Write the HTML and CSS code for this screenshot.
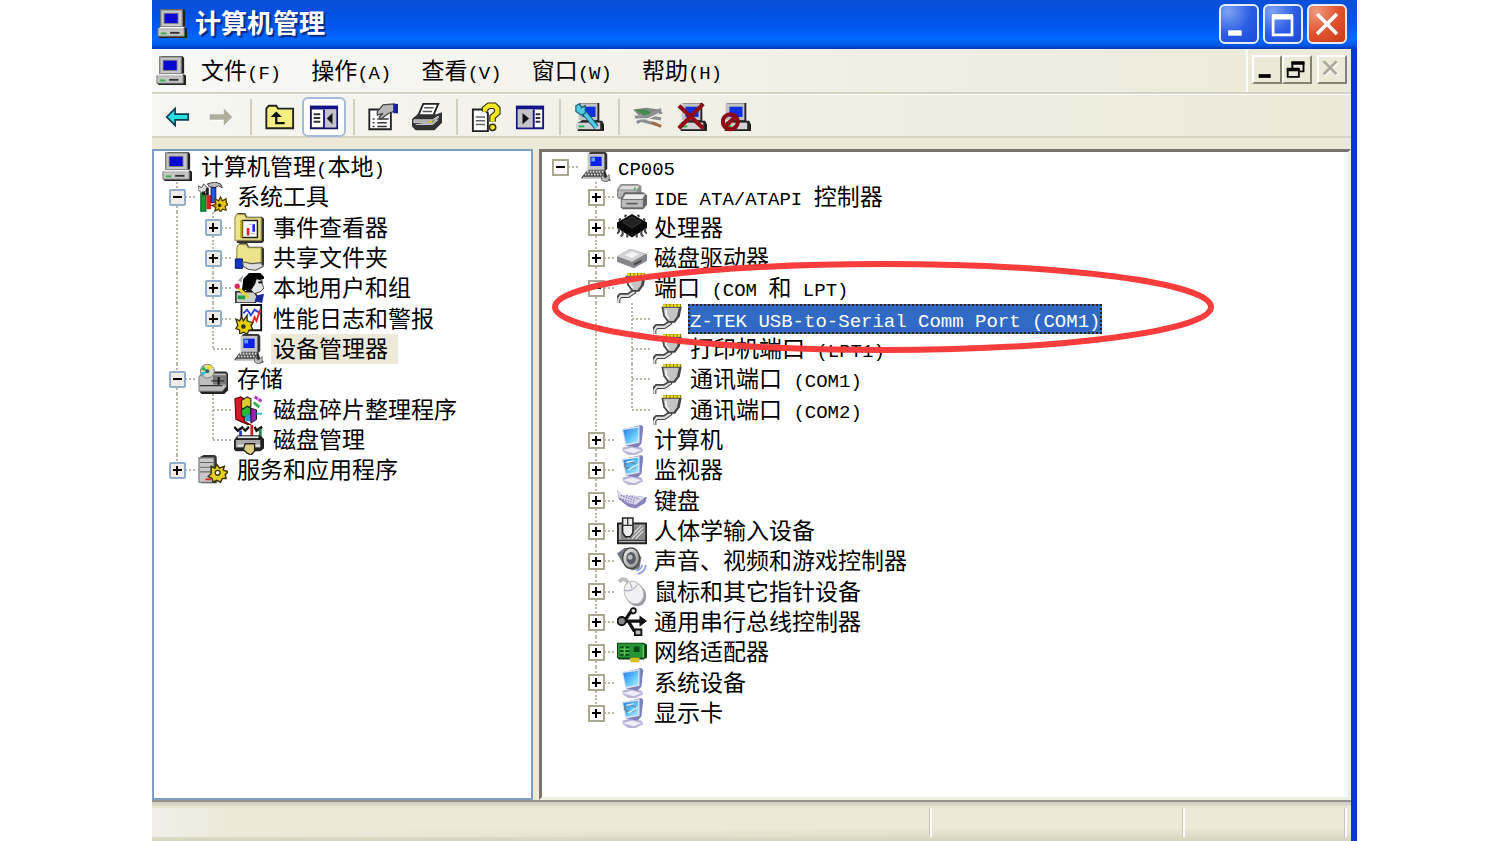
FILE: index.html
```html
<!DOCTYPE html>
<html lang="zh-CN">
<head>
<meta charset="utf-8">
<title>计算机管理</title>
<link rel="stylesheet" href="styles.css">
</head>
<body>
<svg class="sprite" aria-hidden="true">
  <defs>
    <linearGradient id="scr" x1="0" y1="0" x2="1" y2="1"><stop offset="0" stop-color="#2a78e0"/><stop offset=".6" stop-color="#62c8ff"/><stop offset="1" stop-color="#b8ecff"/></linearGradient>
    <linearGradient id="metal" x1="0" y1="0" x2="1" y2="1"><stop offset="0" stop-color="#f4f4f4"/><stop offset="1" stop-color="#858585"/></linearGradient>
  </defs>
  <symbol id="pc" viewBox="0 0 16 16">
    <path d="M3 0h11l1 1v8l-1 1H3z" fill="#222"/><path d="M2 .5h11.500v9H2z" fill="#c8c8c8" stroke="#777" stroke-width=".7"/>
    <path d="M3.500 2h8v6H3.500z" fill="#888"/><path d="M4 2.500h7v5H4z" fill="#0808d0"/>
    <path d="M.5 10.500l2-1h12l1.500 1v5H1.500l-1-1z" fill="#222"/><path d="M.5 10.500h14v4H.5z" fill="#c6c6c6" stroke="#777" stroke-width=".5"/>
    <path d="M.5 10.500l1.500-1h13l-1 1z" fill="#eee"/><path d="M2 13h3" stroke="#38b048"/><path d="M7 12.700h5" stroke="#333"/>
  </symbol>
  <symbol id="dev" viewBox="0 0 16 16">
    <path d="M4 1l1-1h8l1 1v8l-1 1H4z" fill="#333"/><path d="M3.500 1h9v8.500h-9z" fill="#c4c4c4"/><path d="M5 2.500h6v5H5z" fill="#0c20e8"/><path d="M5.500 3h2v2h-2z" fill="#60a0ff"/>
    <path d="M3 10h10l1 3 2 2-3 1-2-2H0z" fill="#333"/><path d="M3 10.500h9M2 12h10" stroke="#ddd" stroke-dasharray="1 .6"/><path d="M1 13.500h11" stroke="#bbb" stroke-width=".7"/>
    <path d="M11 12l2 2 2-2v3l-2 1-2-1z" fill="#bbb" stroke="#555" stroke-width=".4"/>
  </symbol>
  <symbol id="tools" viewBox="0 0 16 16">
    <path d="M0 2l2 1 1-2 2 2-1 2-2 1-2-2z" fill="#ddd" stroke="#444" stroke-width=".5"/><path d="M5 1l4-1 3 1 1 2-2-1-2 1-3-.5z" fill="#bbb" stroke="#333" stroke-width=".5"/>
    <path d="M1.500 6h2.700v9.500H1.500z" fill="#159a28" stroke="#063" stroke-width=".6"/><path d="M4.500 7h2.500v7.500h-2.500z" fill="#e02020"/><path d="M7 3h2.500v8H7z" fill="#2358e8" stroke="#114" stroke-width=".5"/><path d="M5 3v4M3 5v2" stroke="#222" stroke-width="1.500"/>
    <path d="M9 9l2 1 1-2 1 2 2-1v2l1 1-1.500 1 .5 2-2-.5-1 1.500-1-1.500-2 1 .5-2-2-1 2-.5z" fill="#e8c820" stroke="#4c4000" stroke-width=".7"/><circle cx="11.500" cy="12.500" r="1" fill="#443800"/>
  </symbol>
  <symbol id="folder" viewBox="0 0 16 16"><path d="M1 2l1-2h4l1 2h8l1 1v12l-1 1H1.500z" fill="#333"/><path d="M.5 2.500L1.500 .7h4l1 1.800h8v12H.5z" fill="#ece48a" stroke="#99904c" stroke-width=".6"/></symbol>
  <symbol id="event" viewBox="0 0 16 16"><use href="#folder"/><path d="M4.500 4h8v9h-8z" fill="#fff" stroke="#222" stroke-width=".8"/><path d="M4 4v9" stroke="#b09a00" stroke-width="1.500" stroke-dasharray="1 .6"/><path d="M7.500 8v4" stroke="#e22" stroke-width="1.400"/><path d="M10.500 6v4" stroke="#22d" stroke-width="1.400"/><path d="M8 6h2M9 11h2" stroke="#aaa" stroke-width=".5"/></symbol>
  <symbol id="share" viewBox="0 0 16 16"><path d="M2 2l1-2h4l1 2h7l1 1v9H2z" fill="#333"/><path d="M1.500 2.500L2.500 .7h4l1 1.800h7v9h-13z" fill="#ece48a" stroke="#99904c" stroke-width=".6"/><path d="M.7 8.500h3.800v5H.7z" fill="#1038c0" stroke="#001060" stroke-width=".5"/><path d="M4.500 10l5 1 5-.5 1 2-4 2-4-.5-2.500-1.500z" fill="#ddd" stroke="#555" stroke-width=".6"/></symbol>
  <symbol id="users" viewBox="0 0 16 16"><path d="M1 10h10l2 4-2 2H1z" fill="#c8d0c8" stroke="#222" stroke-width=".8"/><path d="M5 3l3-3h6l2 2v1l-3 1-1 4-4 2-2-1-2 2z" fill="#000"/><path d="M12 3l3 1v2l1 2-2 2-3 1-2-2 2-3z" fill="#e4e4e4" stroke="#111" stroke-width=".4"/><path d="M13 5h2" stroke="#000"/><path d="M1 7l7 6" stroke="#e8d030" stroke-width="1.500"/><circle cx="1.700" cy="7" r="1.400" fill="#d82868"/><path d="M2 12h4v2H2z" fill="#20a040"/><path d="M12 12l4-1-1 5-4-1z" fill="#1828a0"/><path d="M2 4l3-3-1 4z" fill="#aaa"/></symbol>
  <symbol id="perf" viewBox="0 0 16 16"><path d="M4 .5h10.500v13.500H4z" fill="#fff" stroke="#111"/><path d="M5 5l2-2 2 3 2-3 3 2" fill="none" stroke="#24d"/><path d="M9 12l2-5 1 2 2-6" fill="none" stroke="#e22"/><path d="M1 8l2 1 1-2 1 2 2-3v3l3 1-1 1.500 1 2-2 .5-1 2-2-1-2 1 0-2-2-1 1-1.500z" fill="#e4d010" stroke="#333000" stroke-width=".7"/><circle cx="5" cy="12" r="1.200" fill="#333000"/></symbol>
  <symbol id="store" viewBox="0 0 16 16"><path d="M1 6l2-2h12l1 1v9l-2 2H2l-1-1z" fill="#222"/><path d="M.5 7l2-2H15v7l-2 2.500H.5z" fill="#bdbdbd" stroke="#777" stroke-width=".5"/><path d="M8 6h7v5H8z" fill="#777"/><path d="M7 9h7M1 11.500h12" stroke="#333" stroke-width=".7"/><path d="M11 7v4" stroke="#111"/><circle cx="5" cy="3.800" r="3.700" fill="#d8d8c8" stroke="#777" stroke-width=".5"/><path d="M5 3.800L1.500 3l1.500-2z" fill="#30b050"/><path d="M5 3.800L4.500 .3l3.500 1z" fill="#f0e020"/><path d="M5 3.800L1.500 4.500l1 2z" fill="#30b8e0"/><circle cx="5" cy="3.800" r="1" fill="#266"/></symbol>
  <symbol id="defrag" viewBox="0 0 16 16"><path d="M.5 2l3-1 2 1v12L9 16l-1 0-7-3z" fill="#d81828" stroke="#600" stroke-width=".6"/><path d="M4 3l3-2 2 1v4l-3 2-2-1z" fill="#e0c828" stroke="#222" stroke-width=".6"/><path d="M4 8l3-2 2 1v3l-3 2-2-1z" fill="#28b838" stroke="#131" stroke-width=".6"/><path d="M6 11l3-1 2 1-1 3-4 0z" fill="#28a0d8"/><path d="M9 7l3 1v5l-3 2z" fill="#a020b0" stroke="#202" stroke-width=".5"/><path d="M11 1l4 2.500" stroke="#b040c8" stroke-width="1.600" stroke-dasharray="2 .4"/><path d="M10.500 4l3 2.500" stroke="#28b848" stroke-width="1.500"/><path d="M12 10h3" stroke="#30c0d0"/></symbol>
  <symbol id="diskmg" viewBox="0 0 16 16"><path d="M0 1l2 2 3-2M8 1l-2 2-1-1M11 1l1 2 3-2" fill="none" stroke="#111" stroke-width="1.300"/><path d="M3.500 3v5" stroke="#24c" stroke-width="1.500"/><path d="M9.500 0v7" stroke="#c22" stroke-width="1.500"/><path d="M14 2v5" stroke="#284" stroke-width="1.500"/><path d="M0 8l2-2.500h12l2 2v5l-2 1.500H1l-1-1z" fill="#222"/><path d="M1 8h13v4H1z" fill="#aaa"/><path d="M2 6.500h11" stroke="#ddd"/><path d="M2 11h3M11 11h3" stroke="#eee"/><path d="M6 10h5v4l-2 2-2-1-2-2z" fill="#ddd080" stroke="#222" stroke-width=".7"/></symbol>
  <symbol id="service" viewBox="0 0 16 16"><path d="M1 1l2-1h6l1 1v14H2l-1-1z" fill="#333"/><path d="M.5 1.500h8v13h-8z" fill="#c8c8c8" stroke="#777" stroke-width=".6"/><path d="M1 4h7M1 6.500h7M1 9h7" stroke="#666" stroke-width=".6"/><path d="M4 13h3" stroke="#d22"/><path d="M7 6l2 1 1-2 1.500 2 2.500-1-.5 2 2.500 1-1.500 1.500.5 2-2 0-1 2-2-1-2 1-.5-2-2-1 1.500-1.500z" fill="#e8d020" stroke="#3c3400" stroke-width=".8"/><circle cx="10.500" cy="9.500" r="1.300" fill="#fff" stroke="#3c3400" stroke-width=".7"/></symbol>
  <symbol id="ide" viewBox="0 0 16 16"><path d="M0 4l2-3h9l2 1v5l-2 2H1L0 8z" fill="#8c8c8c"/><path d="M.7 4.500h10V8H.7z" fill="#b4b4b4"/><path d="M1 4l1.500-2H12l-1.500 2z" fill="#ddd"/><path d="M9 3.500h1" stroke="#2b4"/><path d="M2 9l2-3.500h10l2 1.500v5l-2 2.500H3l-1-1z" fill="#666"/><path d="M2.500 9.500h11.300v4H2.500z" fill="#bababa"/><path d="M3 9l1.500-2.500H15L13.500 9z" fill="#ececec"/><path d="M5 11.500h6" stroke="#555" stroke-width=".8"/></symbol>
  <symbol id="cpu" viewBox="0 0 16 16"><path d="M0 5l8-4.500L16 5v3l-8 5-8-5z" fill="#080808"/><path d="M3 5l5-3 5 3-5 3z" fill="#202020" stroke="#444" stroke-width=".4"/><path d="M1 8v2l-1 1M3 9.500v2l-1 1M5.500 11v2M10.500 11v2M13 9.500v2l1 1M15 8v2l1 1" fill="none" stroke="#444" stroke-width="1.100"/><path d="M2 3l-1 1M5 1l-1 1M11 1l1 1M14 3l1 1" stroke="#333"/></symbol>
  <symbol id="disk" viewBox="0 0 16 16"><path d="M0 7l7-4 9 3v3.500l-7 4L0 10z" fill="#85858c"/><path d="M0 7l7-4 8 3-7 4z" fill="#d2d2d6"/><path d="M4 6.500l4-2 4 1.500-4 2z" fill="#f4f4f6"/><path d="M9 11.500l4-2" stroke="#444"/></symbol>
  <symbol id="port" viewBox="0 0 16 16"><path d="M.5 16v-2.500L2 12h4l3-2V8" fill="none" stroke="#444" stroke-width="2.600"/><path d="M.7 16v-2L2 12.200h4l3-2V8" fill="none" stroke="#ddd" stroke-width="1.100"/><path d="M4.500 1.500h10.800l-1 5-2.500 3.500H8L5.500 6.500z" fill="#444"/><path d="M5.500 2h8.300l-1 4.500L11 9H8.500L6.300 6z" fill="#c4c4c4"/><path d="M7 3v3l1.500 2" fill="none" stroke="#f2f2f2"/><path d="M5.500 .8h9.500" stroke="#777000" stroke-width="1.600"/><path d="M5.500 .8h9.500" stroke="#f4e410" stroke-width="1.400" stroke-dasharray="1.400 .5"/></symbol>
  <symbol id="comp" viewBox="0 0 16 16"><path d="M3 12l4-1 6 1 1 2-4 2H6l-3-2z" fill="#b9b5d8"/><path d="M3 13.500l5-1.500 5 1.500-4 1.500z" fill="#eeedf8"/><path d="M4 2l9-2 1 1-1 9-2 2-6-1z" fill="#7c80bb"/><path d="M2.500 2l9.500-1.500V9.500L4.500 11z" fill="#e0e4f4"/><path d="M3.300 2.700l8-1.200v7.500l-6.500 1z" fill="url(#scr)"/></symbol>
  <symbol id="monitor" viewBox="0 0 16 16"><use href="#comp"/><ellipse cx="7" cy="5.500" rx="3" ry="1.700" fill="none" stroke="#76828c" stroke-width=".8"/><path d="M5 4l4-1M6 8l5-3" stroke="#c9f4ff" stroke-width=".8"/></symbol>
  <symbol id="keyboard" viewBox="0 0 16 16"><path d="M0 2c2 3 5 4 8 3l8 1-1 3-5 3-4-1-5-4z" fill="#8984bc"/><path d="M0 2c2 3 5 4 8 3l7 1-5 4-4-1-5-3z" fill="#ddd9ef"/><path d="M2 5l8 3M5 5l7 2M3 7l6 2" stroke="#8b88ad" stroke-width=".8" stroke-dasharray=".8 .6"/></symbol>
  <symbol id="hid" viewBox="0 0 16 16"><path d="M.5 4h15v10.500H.5z" fill="#b8b8b8" stroke="#222"/><path d="M2 5h13v7.500H2z" fill="#888"/><path d="M8 12l6-6M10 12l4-4M6 12l7-7" stroke="#ddd" stroke-width=".6"/><path d="M3 1h5.500v8l-1.500 2H4.500L3 9z" fill="#ececec" stroke="#222" stroke-width=".8"/><path d="M3 5h5.500M5.700 1v4M1 13h14" stroke="#333" stroke-width=".7"/></symbol>
  <symbol id="sound" viewBox="0 0 16 16"><path d="M0 4l4-3 5 0 4 5-1 6-4 1-5-4z" fill="#737783"/><ellipse cx="7.500" cy="6.500" rx="4.500" ry="5.500" fill="url(#metal)" stroke="#444" stroke-width=".7"/><ellipse cx="7.500" cy="6.500" rx="2.500" ry="3.300" fill="#595e66"/><circle cx="7" cy="6" r="1.300" fill="#bbb"/><path d="M10 13c2 0 3-1 3.500-3M11 15c2-.5 4-2 4.500-5" fill="none" stroke="#9aa4ea"/></symbol>
  <symbol id="mouse" viewBox="0 0 16 16"><path d="M1 2.500c3-3 5 0 5 2" fill="none" stroke="#bbb" stroke-width="2"/><ellipse cx="10" cy="9.300" rx="5.300" ry="6.500" transform="rotate(-25 10 9.300)" fill="#9a9aa2"/><ellipse cx="9" cy="8.300" rx="5" ry="6.200" transform="rotate(-25 9 8.300)" fill="#f1f1f4" stroke="#bbb" stroke-width=".5"/><path d="M4 7c2 1 5 0 7-3M7 3l1 3" fill="none" stroke="#aab" stroke-width=".6"/></symbol>
  <symbol id="usb" viewBox="0 0 16 16"><path d="M2 7.500h11M4 7.500l3-4.500h2M6 7.500l3 5h2" fill="none" stroke="#111" stroke-width="1.700"/><circle cx="2.500" cy="7.500" r="2.200" fill="#888" stroke="#111"/><path d="M12 4.500l4 3-4 3z" fill="#111"/><circle cx="8.700" cy="2" r="1.400" fill="#ddd" stroke="#111" stroke-width=".9"/><path d="M9.500 12h3.500v3H9.500z" fill="#bbb" stroke="#111"/></symbol>
  <symbol id="net" viewBox="0 0 16 16"><path d="M0 3h14l2 1v7l-2 1H1L0 11z" fill="#123c12"/><path d="M.5 3.500h13V11H.5z" fill="#259535"/><path d="M1.500 5h5v5h-5zM9 5h3v3H9z" fill="#0b4a18"/><path d="M1.500 6.500h5M1.500 8.500h5M4 5v5" stroke="#5c5" stroke-width=".8"/><path d="M7 11h5v2.500H7z" fill="#d8c020"/><path d="M14 4v7" stroke="#5c5"/></symbol>
  <symbol id="back" viewBox="0 0 16 16"><path d="M2.500 8L7 3.500V6.500h7v3H7v3z" fill="#28e0e0" stroke="#103c50" stroke-width=".9"/></symbol>
  <symbol id="forward" viewBox="0 0 16 16"><path d="M14.500 8.500L10 4v3H3v3h7v3z" fill="#fff"/><path d="M14 8L9.500 3.500v3H2v3h7.500v3z" fill="#b1ae9f"/></symbol>
  <symbol id="up" viewBox="0 0 16 16"><path d="M.7 14V3.500L2 2h4l1 1.500h8V14z" fill="#f4ef80" stroke="#222"/><path d="M10.500 11.300H6V6" fill="none" stroke="#111" stroke-width="1.200"/><path d="M3 8l3-3 3 3z" fill="#111"/></symbol>
  <symbol id="hide" viewBox="0 0 16 16"><path d="M1 2.500h14V14H1z" fill="#fff" stroke="#141468"/><path d="M.5 2h15v2H.5z" fill="#141488"/><path d="M8 4h6.500v9.500H8z" fill="#c5c3c8"/><path d="M8 4v10" stroke="#141488"/><path d="M2.500 6.500h3.500M2.500 8.500h3.500M2.500 10.500h3.500" stroke="#333"/><path d="M12.500 5.800v6l-3-3z" fill="#111"/></symbol>
  <symbol id="show" viewBox="0 0 16 16"><path d="M1 2.500h14V14H1z" fill="#fff" stroke="#141488"/><path d="M.5 2h15v2H.5z" fill="#141488"/><path d="M1.500 4H10v9.500H1.500z" fill="#c5c3c8"/><path d="M10 4v10" stroke="#141488"/><path d="M11 6.500h2.500M11 8.500h2.500M11 10.500h2.500" stroke="#333"/><path d="M4 5.800v6l3.500-3z" fill="#111"/></symbol>
  <symbol id="props" viewBox="0 0 16 16"><path d="M.7 4h11.500v10.500H.7z" fill="#fff" stroke="#222"/><path d="M2.500 9h1M2.500 11h1M2.500 13h1M5 9h6M5 11h5M5 13h5" stroke="#333" stroke-width=".8"/><path d="M5 5l3-3.500 6-.5v4L11 6 7 9 6 8l2-2-3 1z" fill="#b8b8b8" stroke="#444" stroke-width=".7"/><path d="M13.500 1H16v5h-2.500z" fill="#1a1ab0"/></symbol>
  <symbol id="print" viewBox="0 0 16 16"><path d="M6 1h8l-3 7H3z" fill="#fff" stroke="#222"/><path d="M6.500 3h5M5.700 5h5" stroke="#555" stroke-width=".8"/><path d="M0 9l3-2.500h10l3-1V11l-4 4H2l-2-2z" fill="#333"/><path d="M1 9.500h10l3-2v1l-3 2.500H1zM2 12h9l3-2.500" fill="#aaa" stroke="#ccc" stroke-width=".5"/><path d="M9 10.500h2" stroke="#d8c820"/></symbol>
  <symbol id="help" viewBox="0 0 16 16"><path d="M1 4h6l2 2v9.500H1z" fill="#fff" stroke="#222"/><path d="M2.500 8h5M2.500 10h5M2.500 12h5" stroke="#666" stroke-width=".7"/><path d="M7.500 5V3.500L9.500 2h3L14 3.500v2.300L11.500 8v2.500" fill="none" stroke="#333000" stroke-width="3.500"/><path d="M7.500 5V3.500L9.500 2h3L14 3.500v2.300L11.500 8v2.500" fill="none" stroke="#f4e820" stroke-width="2.300"/><circle cx="11.500" cy="13.500" r="1.700" fill="#f4e820" stroke="#333000" stroke-width=".8"/></symbol>
  <symbol id="screen" viewBox="0 0 16 16"><path d="M3 .5h10.500V10H15l1 2v3.500H2V11l2-1z" fill="#222"/><path d="M2.500 .7h10v9h-10z" fill="#c2c2c2"/><path d="M4.500 2.500h7V8h-7z" fill="#1030e0"/><path d="M1 11h13v3.500H1z" fill="#d2d2d2"/><path d="M2.500 13h3" stroke="#1b4"/></symbol>
  <symbol id="scan" viewBox="0 0 16 16"><use href="#screen"/><path d="M4 4l8 9.500" stroke="#155a70" stroke-width="3"/><path d="M4 4l8 9.500" stroke="#52cbe4" stroke-width="1.900"/><path d="M1 2l2-1 1 2 2-1v4L4 7 1 5z" fill="#52cbe4" stroke="#155a70" stroke-width=".6"/></symbol>
  <symbol id="update" viewBox="0 0 16 16"><path d="M0 4l7-1 7 1 2 2-7 2-6-1z" fill="#828883"/><path d="M1 4l6 0 3 2-4 1z" fill="#3f8c4b"/><path d="M1 8l6 0 8-4M2 11l6-3 7 1M5 10l8 2" fill="none" stroke="#8b8f8f" stroke-width="1.700"/><path d="M3 9l5 0 6-3" stroke="#eee" fill="none" stroke-width=".7"/><path d="M10 11l5 2" stroke="#a46a44" stroke-width="1.700"/></symbol>
  <symbol id="remove" viewBox="0 0 16 16"><use href="#screen"/><path d="M1 2l13 12M14 1L1 14" stroke="#8f0a14" stroke-width="2.200"/></symbol>
  <symbol id="disable" viewBox="0 0 16 16"><use href="#screen"/><circle cx="5" cy="10.500" r="4" fill="none" stroke="#8f0a14" stroke-width="2.200"/><path d="M2 13.500l6-6" stroke="#8f0a14" stroke-width="2.200"/></symbol>
</svg>

<div class="window">
  <header class="titlebar">
    <svg class="icon"><use href="#pc"/></svg>
    <h1>计算机管理</h1>
    <div class="controls">
      <button class="ctl" aria-label="最小化"><svg viewBox="0 0 40 40"><path d="M8 30h15" stroke="#fff" stroke-width="6"/></svg></button>
      <button class="ctl" aria-label="最大化"><svg viewBox="0 0 40 40"><path d="M9 12h21v20H9z" fill="none" stroke="#fff" stroke-width="3"/><path d="M8 12h23" stroke="#fff" stroke-width="6"/></svg></button>
      <button class="ctl close" aria-label="关闭"><svg viewBox="0 0 40 40"><path d="M9 9l22 22M31 9L9 31" stroke="#fff" stroke-width="4"/></svg></button>
    </div>
  </header>

  <div class="frame">
    <nav class="menubar">
      <svg class="icon"><use href="#pc"/></svg>
      <button>文件<span class="en">(F)</span></button>
      <button>操作<span class="en">(A)</span></button>
      <button>查看<span class="en">(V)</span></button>
      <button>窗口<span class="en">(W)</span></button>
      <button>帮助<span class="en">(H)</span></button>
      <div class="mdi">
        <button aria-label="最小化子窗口"><svg viewBox="0 0 28 26"><path d="M5 20h13" stroke="#000" stroke-width="4"/></svg></button>
        <button aria-label="还原子窗口"><svg viewBox="0 0 28 26"><path d="M9 12V6h12v9h-4" fill="none" stroke="#000" stroke-width="2"/><path d="M8 6h14M3 13h14" stroke="#000" stroke-width="4"/><path d="M4 13h12v8H4z" fill="none" stroke="#000" stroke-width="2"/></svg></button>
        <button class="off" aria-label="关闭子窗口" disabled><svg viewBox="0 0 28 26"><path d="M6 5l14 14M20 5L6 19" stroke="#fff" stroke-width="4"/><path d="M5 4l14 14M19 4L5 18" stroke="#aaa99b" stroke-width="3"/></svg></button>
      </div>
    </nav>

    <div class="toolbar">
      <button aria-label="后退"><svg class="icon"><use href="#back"/></svg></button>
      <button aria-label="前进"><svg class="icon"><use href="#forward"/></svg></button>
      <i class="sep"></i>
      <button aria-label="向上"><svg class="icon"><use href="#up"/></svg></button>
      <button class="on" aria-label="显示/隐藏控制台树" aria-pressed="true"><svg class="icon"><use href="#hide"/></svg></button>
      <i class="sep"></i>
      <button aria-label="属性"><svg class="icon"><use href="#props"/></svg></button>
      <button aria-label="打印"><svg class="icon"><use href="#print"/></svg></button>
      <i class="sep"></i>
      <button aria-label="帮助"><svg class="icon"><use href="#help"/></svg></button>
      <button aria-label="操作窗格"><svg class="icon"><use href="#show"/></svg></button>
      <i class="sep"></i>
      <button aria-label="扫描硬件改动"><svg class="icon"><use href="#scan"/></svg></button>
      <i class="sep"></i>
      <button aria-label="更新驱动程序"><svg class="icon"><use href="#update"/></svg></button>
      <button aria-label="卸载"><svg class="icon"><use href="#remove"/></svg></button>
      <button aria-label="停用"><svg class="icon"><use href="#disable"/></svg></button>
    </div>

    <main class="panes">
      <ul class="tree console">
        <li><svg class="icon"><use href="#pc"/></svg><span class="label">计算机管理<span class="en">(</span>本地<span class="en">)</span></span></li>
        <li><i class="cell v h"><button class="tog minus" aria-label="折叠"></button></i><svg class="icon"><use href="#tools"/></svg><span class="label">系统工具</span></li>
        <li><i class="cell v"></i><i class="cell v h"><button class="tog" aria-label="展开"></button></i><svg class="icon"><use href="#event"/></svg><span class="label">事件查看器</span></li>
        <li><i class="cell v"></i><i class="cell v h"><button class="tog" aria-label="展开"></button></i><svg class="icon"><use href="#share"/></svg><span class="label">共享文件夹</span></li>
        <li><i class="cell v"></i><i class="cell v h"><button class="tog" aria-label="展开"></button></i><svg class="icon"><use href="#users"/></svg><span class="label">本地用户和组</span></li>
        <li><i class="cell v"></i><i class="cell v h"><button class="tog" aria-label="展开"></button></i><svg class="icon"><use href="#perf"/></svg><span class="label">性能日志和警报</span></li>
        <li><i class="cell v"></i><i class="cell v h last"></i><svg class="icon"><use href="#dev"/></svg><span class="label current">设备管理器</span></li>
        <li><i class="cell v h"><button class="tog minus" aria-label="折叠"></button></i><svg class="icon"><use href="#store"/></svg><span class="label">存储</span></li>
        <li><i class="cell v"></i><i class="cell v h"></i><svg class="icon"><use href="#defrag"/></svg><span class="label">磁盘碎片整理程序</span></li>
        <li><i class="cell v"></i><i class="cell v h last"></i><svg class="icon"><use href="#diskmg"/></svg><span class="label">磁盘管理</span></li>
        <li><i class="cell v h last"><button class="tog" aria-label="展开"></button></i><svg class="icon"><use href="#service"/></svg><span class="label">服务和应用程序</span></li>
      </ul>

      <section class="devices">
        <ul class="tree">
          <li><i class="cell h"><button class="tog minus" aria-label="折叠"></button></i><svg class="icon"><use href="#dev"/></svg><span class="label"><span class="en">CP005</span></span></li>
          <li><i class="cell"></i><i class="cell v h"><button class="tog" aria-label="展开"></button></i><svg class="icon"><use href="#ide"/></svg><span class="label"><span class="en">IDE ATA/ATAPI </span>控制器</span></li>
          <li><i class="cell"></i><i class="cell v h"><button class="tog" aria-label="展开"></button></i><svg class="icon"><use href="#cpu"/></svg><span class="label">处理器</span></li>
          <li><i class="cell"></i><i class="cell v h"><button class="tog" aria-label="展开"></button></i><svg class="icon"><use href="#disk"/></svg><span class="label">磁盘驱动器</span></li>
          <li><i class="cell"></i><i class="cell v h"><button class="tog minus" aria-label="折叠"></button></i><svg class="icon"><use href="#port"/></svg><span class="label">端口<span class="en"> (COM </span>和<span class="en"> LPT)</span></span></li>
          <li><i class="cell"></i><i class="cell v"></i><i class="cell v h"></i><svg class="icon"><use href="#port"/></svg><span class="label selected"><span class="en">Z-TEK USB-to-Serial Comm Port (COM1)</span></span></li>
          <li><i class="cell"></i><i class="cell v"></i><i class="cell v h"></i><svg class="icon"><use href="#port"/></svg><span class="label">打印机端口<span class="en"> (LPT1)</span></span></li>
          <li><i class="cell"></i><i class="cell v"></i><i class="cell v h"></i><svg class="icon"><use href="#port"/></svg><span class="label">通讯端口<span class="en"> (COM1)</span></span></li>
          <li><i class="cell"></i><i class="cell v"></i><i class="cell v h last"></i><svg class="icon"><use href="#port"/></svg><span class="label">通讯端口<span class="en"> (COM2)</span></span></li>
          <li><i class="cell"></i><i class="cell v h"><button class="tog" aria-label="展开"></button></i><svg class="icon"><use href="#comp"/></svg><span class="label">计算机</span></li>
          <li><i class="cell"></i><i class="cell v h"><button class="tog" aria-label="展开"></button></i><svg class="icon"><use href="#monitor"/></svg><span class="label">监视器</span></li>
          <li><i class="cell"></i><i class="cell v h"><button class="tog" aria-label="展开"></button></i><svg class="icon"><use href="#keyboard"/></svg><span class="label">键盘</span></li>
          <li><i class="cell"></i><i class="cell v h"><button class="tog" aria-label="展开"></button></i><svg class="icon"><use href="#hid"/></svg><span class="label">人体学输入设备</span></li>
          <li><i class="cell"></i><i class="cell v h"><button class="tog" aria-label="展开"></button></i><svg class="icon"><use href="#sound"/></svg><span class="label">声音、视频和游戏控制器</span></li>
          <li><i class="cell"></i><i class="cell v h"><button class="tog" aria-label="展开"></button></i><svg class="icon"><use href="#mouse"/></svg><span class="label">鼠标和其它指针设备</span></li>
          <li><i class="cell"></i><i class="cell v h"><button class="tog" aria-label="展开"></button></i><svg class="icon"><use href="#usb"/></svg><span class="label">通用串行总线控制器</span></li>
          <li><i class="cell"></i><i class="cell v h"><button class="tog" aria-label="展开"></button></i><svg class="icon"><use href="#net"/></svg><span class="label">网络适配器</span></li>
          <li><i class="cell"></i><i class="cell v h"><button class="tog" aria-label="展开"></button></i><svg class="icon"><use href="#comp"/></svg><span class="label">系统设备</span></li>
          <li><i class="cell"></i><i class="cell v h last"><button class="tog" aria-label="展开"></button></i><svg class="icon"><use href="#monitor"/></svg><span class="label">显示卡</span></li>
        </ul>
        <svg class="mark" viewBox="0 0 664 94" aria-hidden="true"><ellipse cx="332" cy="47" rx="328" ry="43" fill="none" stroke="#f93c3c" stroke-width="6"/></svg>
      </section>
    </main>

    <footer class="status"><span></span><span></span><span></span></footer>
  </div>
</div>
</body>
</html>
```
FILE: styles.css
```css
* { box-sizing: border-box; }

body {
  margin: 0;
  padding: 0 143px 0 152px;
  background: #fff;
  color: #000;
  font: 23px/30px "Liberation Sans", "Noto Sans CJK SC", sans-serif;
}

button {
  margin: 0;
  padding: 0;
  border: 0;
  background: none;
  color: inherit;
  font: inherit;
}

.sprite { position: absolute; width: 0; height: 0; }
.icon { flex: none; width: 30px; height: 30px; }
.en { font-family: "Liberation Mono", monospace; font-size: 19px; line-height: 20px; white-space: pre; }

.window { display: flex; flex-direction: column; min-height: 100vh; }

.titlebar {
  display: flex;
  align-items: center;
  gap: 8px;
  height: 49px;
  padding: 0 10px 2px 5px;
  background: linear-gradient(#0b4fd8 0, #0450e0 25%, #0058f0 55%, #0068ff 80%, #0058e8 92%, #0038b8);
}
.titlebar h1 {
  flex: 1;
  margin: 0;
  color: #fff;
  font-size: 26px;
  font-weight: 700;
  line-height: 36px;
  text-shadow: 2px 2px 1px #0a2a80;
}
.controls { display: flex; gap: 4px; }
.ctl {
  width: 40px;
  height: 40px;
  border: 2px solid #e4ecff;
  border-radius: 6px;
  background: radial-gradient(circle at 20% 15%, #7da2f4, #2a5ce4 55%, #1a4ad8);
}
.ctl svg { display: block; width: 36px; height: 36px; }
.close { background: radial-gradient(circle at 20% 15%, #f09a80, #e0502c 55%, #c83a18); }

.frame {
  flex: 1;
  display: flex;
  flex-direction: column;
  border-right: 6px solid #0838d0;
  background: #ece9d8;
}

.menubar {
  display: flex;
  align-items: center;
  gap: 30px;
  height: 45px;
  padding-left: 4px;
  border-bottom: 2px solid #d6d2c2;
  background: linear-gradient(90deg, #f8f8f7, #ece9d8);
}
.menubar > .icon { margin-right: -15px; }
.menubar > button { white-space: nowrap; }
.mdi {
  display: flex;
  align-self: stretch;
  align-items: center;
  margin-left: auto;
  padding: 0 4px 3px;
  border-left: 2px solid #fff;
  background: #ece9d8;
}
.mdi button {
  width: 30px;
  height: 29px;
  border: 2px solid;
  border-color: #fff #858272 #858272 #fff;
}
.mdi svg { display: block; width: 26px; height: 25px; }
.mdi .off { margin-left: 5px; }

.toolbar {
  display: flex;
  align-items: center;
  height: 44px;
  padding: 2px 0 0 3px;
  border-top: 1px solid #fff;
  border-bottom: 2px solid #d8d4c4;
  background: linear-gradient(90deg, #f6f6f2, #ece9d8);
}
.toolbar button { display: grid; place-items: center; width: 44px; height: 40px; }
.toolbar .on { border: 2px solid #a3bbd6; border-radius: 6px; background: #fff; }
.sep { width: 2px; height: 36px; margin: 0 6px 0 7px; background: #d2cfbf; }

.panes { flex: 1; display: flex; gap: 6px; padding-top: 11px; }

.tree { margin: 0; padding: 0; list-style: none; }
.tree li { display: flex; align-items: center; height: 30px; }
.tree li:nth-child(3n) { height: 31px; }
.tree .icon { margin: 0 3px; }

.console {
  flex: 0 0 381px;
  padding: 1px 0 0 5px;
  border: 2px solid #7f9fc0;
  background: #fff;
}
.devices {
  position: relative;
  flex: 1;
  border: 3px solid;
  border-color: #77756a #f1efe2 #f1efe2 #77756a;
  background: #fff;
}

.cell { flex: none; display: grid; place-items: center; align-self: stretch; width: 36px; }
.v { background: repeating-linear-gradient(#b9b7a8 0 2px, transparent 2px 4px) 17px 0 / 2px 100% no-repeat; }
.h { background: repeating-linear-gradient(90deg, #b9b7a8 0 2px, transparent 2px 4px) 18px 50% / 18px 2px no-repeat; }
.v.h {
  background:
    repeating-linear-gradient(#b9b7a8 0 2px, transparent 2px 4px) 17px 0 / 2px 100% no-repeat,
    repeating-linear-gradient(90deg, #b9b7a8 0 2px, transparent 2px 4px) 18px 50% / 18px 2px no-repeat;
}
.v.h.last { background-size: 2px 50%, 18px 2px; }

.tog {
  width: 17px;
  height: 17px;
  border: 2px solid #aaa893;
  background:
    linear-gradient(#000, #000) center / 9px 2px no-repeat,
    linear-gradient(#000, #000) center / 2px 9px no-repeat,
    #fff;
}
.tog.minus { background: linear-gradient(#000, #000) center / 9px 2px no-repeat, #fff; }
.console .tog { border-color: #91afcd; border-radius: 2px; background-color: #eeece4; }

.label { margin-left: 2px; padding: 0 2px; line-height: 30px; white-space: nowrap; }
.console .label { margin-left: 4px; }
.console .current { padding-right: 10px; background: #ece9d8; }
.selected { outline: 2px dotted #2c2410; outline-offset: -2px; background: #316ac5; color: #fff; }

.mark { position: absolute; top: 108px; left: 9px; width: 664px; height: 94px; pointer-events: none; }

.status {
  display: flex;
  height: 41px;
  padding: 6px 4px 4px 0;
  border-top: 2px solid #96948a;
  background: linear-gradient(#cfccbd, #ece9d8 6px, #ece9d8 26px, #d6d3bd);
}
.status span { border-right: 2px solid #fff; box-shadow: inset -1px 0 #c9c6b4; }
.status span:nth-child(1) { flex: 1; background: linear-gradient(90deg, #f0efea, #ece9d8 80px, transparent); }
.status span:nth-child(2) { width: 253px; }
.status span:nth-child(3) { width: 162px; }
```
